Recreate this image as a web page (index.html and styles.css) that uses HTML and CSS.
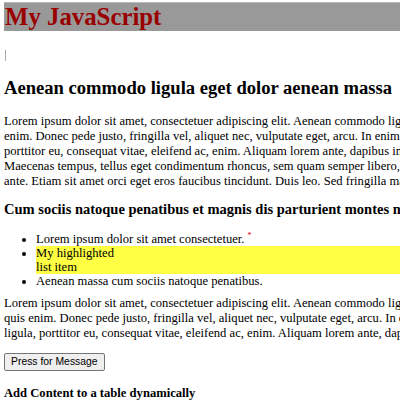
FILE: index.html
```html
<!DOCTYPE html>
<html lang="en">
<head>
<meta charset="utf-8">
<title>My JavaScript</title>
<link rel="stylesheet" href="styles.css">
</head>
<body>
<div class="page">
  <header class="site-header">
    <h1 class="site-title">My JavaScript</h1>
  </header>
  <div class="output"><span class="output-caret"></span></div>
  <h2 class="section-title">Aenean commodo ligula eget dolor aenean massa</h2>
  <p class="text">Lorem ipsum dolor sit amet, consectetuer adipiscing elit. Aenean commodo ligula eget dolor. Aenean massa. Cum sociis natoque penatibus et magnis dis parturient montes, nascetur ridiculus mus. Donec quam felis, ultricies nec, pellentesque eu, pretium quis, sem. Nulla consequat massa quis<br>enim. Donec pede justo, fringilla vel, aliquet nec, vulputate eget, arcu. In enim justo, rhoncus ut, imperdiet a, venenatis vitae, justo. Nullam dictum felis eu pede mollis pretium. Integer tincidunt. Cras dapibus. Vivamus elementum semper nisi. Aenean vulputate eleifend tellus. Aenean leo ligula,<br>porttitor eu, consequat vitae, eleifend ac, enim. Aliquam lorem ante, dapibus in, viverra quis, feugiat a, tellus. Phasellus viverra nulla ut metus varius laoreet. Quisque rutrum. Aenean imperdiet. Etiam ultricies nisi vel augue. Curabitur ullamcorper ultricies nisi. Nam eget dui. Etiam rhoncus.<br>Maecenas tempus, tellus eget condimentum rhoncus, sem quam semper libero, sit amet adipiscing sem neque sed ipsum. Nam quam nunc, blandit vel, luctus pulvinar, hendrerit id, lorem. Maecenas nec odio et ante tincidunt tempus. Donec vitae sapien ut libero venenatis faucibus. Nullam quis<br>ante. Etiam sit amet orci eget eros faucibus tincidunt. Duis leo. Sed fringilla mauris sit amet nibh. Donec sodales sagittis magna. Sed consequat, leo eget bibendum sodales, augue velit cursus nunc.</p>
  <h3 class="sub-title">Cum sociis natoque penatibus et magnis dis parturient montes nascetur ridiculus mus</h3>
  <ul class="list">
    <li>Lorem ipsum dolor sit amet consectetuer. <span class="mark">*</span></li>
    <li><span class="highlight">My highlighted<br>list item</span></li>
    <li>Aenean massa cum sociis natoque penatibus.</li>
  </ul>
  <p class="text text-after-list">Lorem ipsum dolor sit amet, consectetuer adipiscing elit. Aenean commodo ligula eget dolor. Aenean massa. Cum sociis natoque penatibus et magnis dis parturient montes, nascetur ridiculus mus. Donec quam felis, ultricies nec, pellentesque eu, pretium quis, sem. Nulla consequat massa<br>quis enim. Donec pede justo, fringilla vel, aliquet nec, vulputate eget, arcu. In enim justo, rhoncus ut, imperdiet a, venenatis vitae, justo. Nullam dictum felis eu pede mollis pretium. Integer tincidunt. Cras dapibus. Vivamus elementum semper nisi. Aenean vulputate eleifend tellus. Aenean leo<br>ligula, porttitor eu, consequat vitae, eleifend ac, enim. Aliquam lorem ante, dapibus in, viverra quis, feugiat a, tellus.</p>
  <button class="msg-button" type="button">Press for Message</button>
  <h4 class="table-title">Add Content to a table dynamically</h4>
</div>
</body>
</html>
```

FILE: styles.css
```css
html {
  overflow: hidden;
}

body {
  margin: 2px 0 0 4px;
  font-family: "Liberation Serif", "Times New Roman", serif;
  font-size: 12.6px;
  color: #000;
  background: #fff;
}

.page {
  width: 1600px;
}

.site-title {
  margin: 0;
  padding-left: 1px;
  font-size: 24.8px;
  line-height: 28px;
  color: #900;
  background: #999;
  border-top: 1px solid #b9b9b9;
}

.output {
  margin-top: 19px;
  height: 11px;
}

.output-caret {
  display: block;
  width: 1px;
  height: 11px;
  margin-left: 1px;
  background: #aaa;
}

.section-title {
  margin: 16px 0 15px;
  font-size: 18.6px;
}

.text {
  margin: 12.4px 0;
  white-space: nowrap;
}

.sub-title {
  margin: 11.5px 0 13.5px;
  font-size: 14.5px;
  white-space: nowrap;
}

.list {
  margin: 0;
  padding-left: 32px;
}

.list li {
  line-height: 14px;
}

.mark {
  display: inline-block;
  color: #e00;
  font-size: 8px;
  line-height: 8px;
  vertical-align: top;
}

.highlight {
  display: block;
  background: #ffff44;
}

.text-after-list {
  margin-top: 8px;
}

.msg-button {
  font-family: "Liberation Sans", Arial, sans-serif;
  font-size: 10.4px;
  line-height: 12px;
  padding: 2px 6px;
  color: #000;
  background: #efefef;
  border: 1px solid #767676;
  border-radius: 2px;
}

.table-title {
  margin: 15px 0;
  font-size: 12.6px;
}
```
